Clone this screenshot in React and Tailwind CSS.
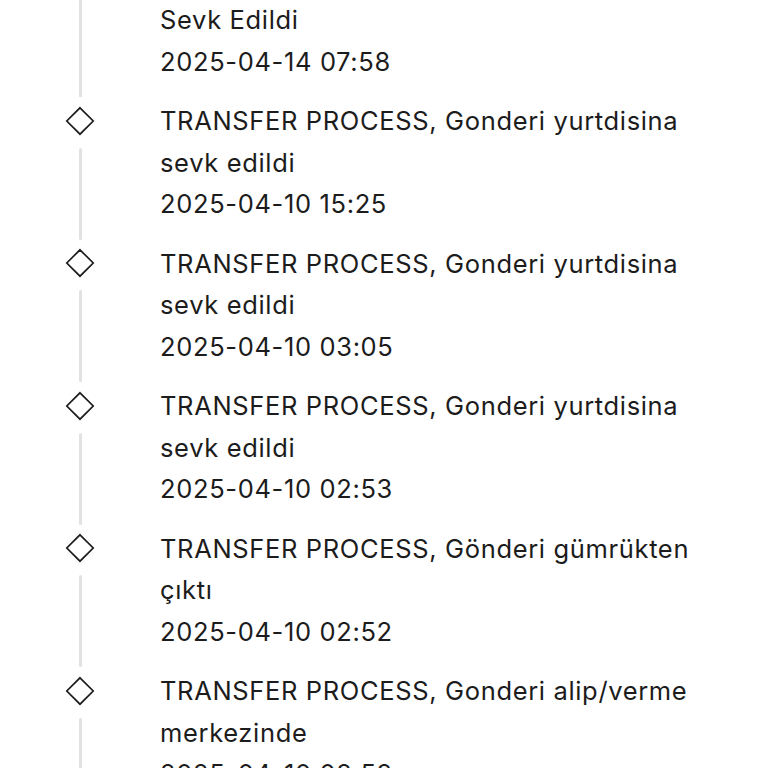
import React from 'react';

const events = [
  { lines: ['Sevk Edildi'], date: '2025-04-14 07:58' },
  { title: 'TRANSFER PROCESS, Gonderi yurtdisina sevk edildi', date: '2025-04-10 15:25' },
  { title: 'TRANSFER PROCESS, Gonderi yurtdisina sevk edildi', date: '2025-04-10 03:05' },
  { title: 'TRANSFER PROCESS, Gonderi yurtdisina sevk edildi', date: '2025-04-10 02:53' },
  { title: 'TRANSFER PROCESS, Gönderi gümrükten çıktı', date: '2025-04-10 02:52' },
  { title: 'TRANSFER PROCESS, Gonderi alip/verme merkezinde', date: '2025-04-10 02:52' },
];

const Diamond = () => (
  <svg width="30" height="30" viewBox="0 0 30 30" className="block">
    <path d="M15 1.8 L28.2 15 L15 28.2 L1.8 15 Z" fill="none" stroke="#1c1c1c" strokeWidth="1.7" strokeLinejoin="miter" />
  </svg>
);

const TimelineItem = ({ item, first }) => (
  <div className="flex">
    <div className="w-[160px] flex flex-col items-center shrink-0">
      {first ? (
        <div className="w-[3px] flex-1 bg-[#e2e2e2] mb-[3px]" />
      ) : (
        <>
          <div className="h-[41.5px] flex items-center justify-center">
            <Diamond />
          </div>
          <div className="w-[3px] flex-1 bg-[#e2e2e2] mt-[6px] mb-[3px] rounded-full" />
        </>
      )}
    </div>
    <div className="flex-1 pb-[18px] text-[25.5px] leading-[41.5px] tracking-[0.65px] text-[#1c1c1c]">
      {item.lines ? (
        item.lines.map((l) => <div key={l}>{l}</div>)
      ) : (
        <div>{item.title}</div>
      )}
      <div>{item.date}</div>
    </div>
  </div>
);

export default function App() {
  return (
    <div className="w-[768px] h-[768px] overflow-hidden bg-white" style={{ fontFamily: 'Inter, "Noto Sans", sans-serif' }}>
      <div className="-mt-[1px] pr-[50px]">
        {events.map((e, i) => (
          <TimelineItem key={i} item={e} first={i === 0} />
        ))}
      </div>
    </div>
  );
}
